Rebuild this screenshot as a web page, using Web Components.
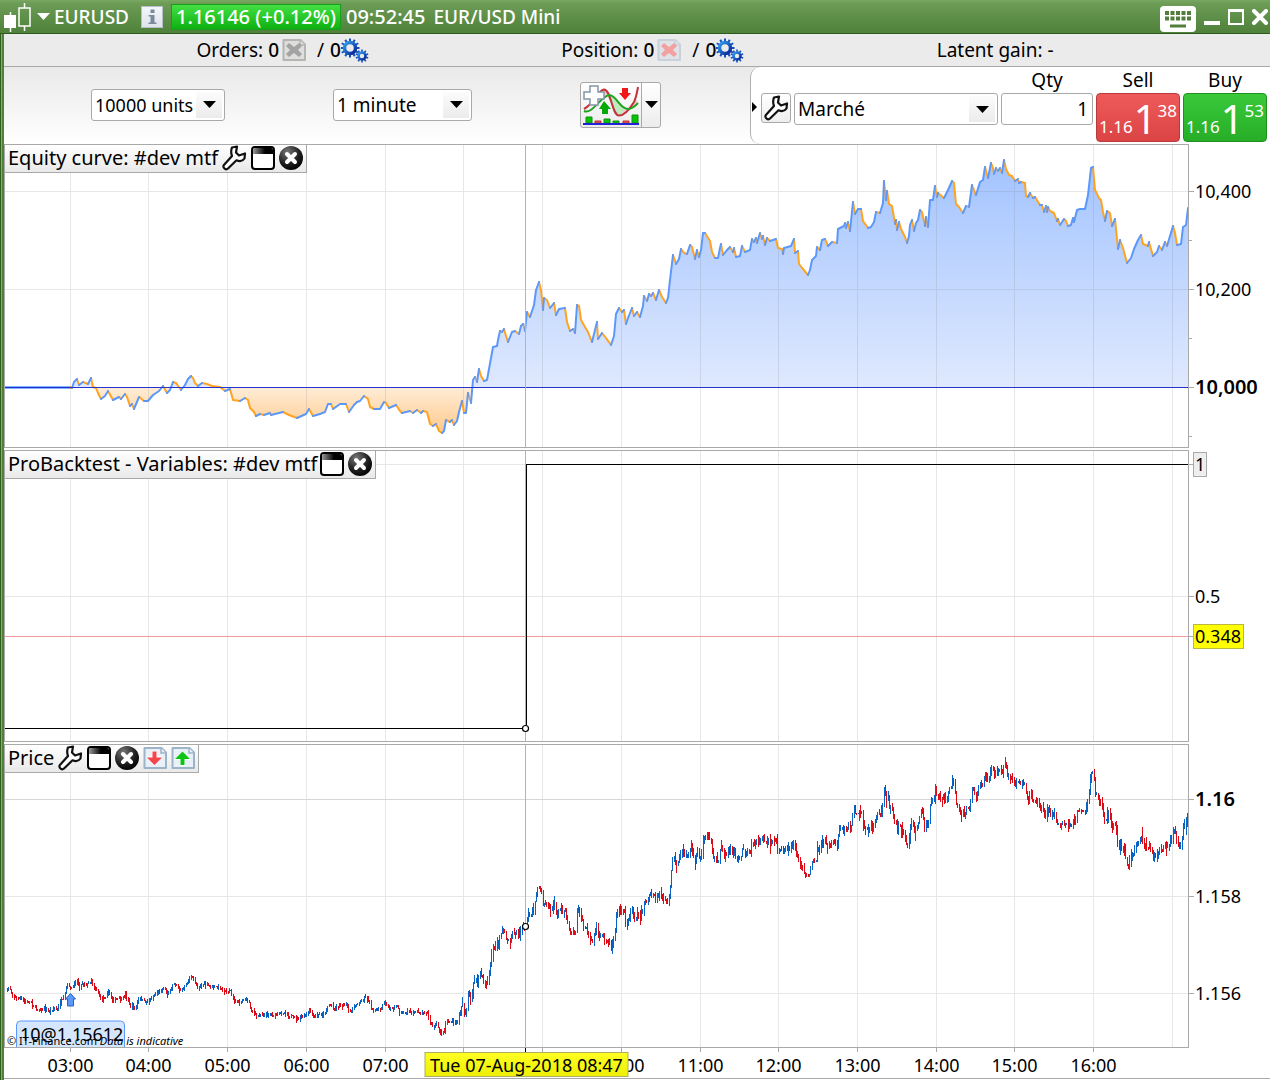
<!DOCTYPE html>
<html lang="en">
<head>
<meta charset="utf-8">
<meta name="viewport" content="width=device-width, initial-scale=1">
<title>EURUSD - EUR/USD Mini</title>
<style>
html,body{margin:0;background:#fff}
body{font:19px/24px "Noto Sans","Open Sans",sans-serif;color:#000}
</style>
</head>
<body>
<trading-window></trading-window>
<script>
const define=(name,html,setup)=>customElements.define(name,class extends HTMLElement{
  connectedCallback(){
    if(this.shadowRoot)return;
    const root=this.attachShadow({mode:'open'});
    root.innerHTML='<style>*{box-sizing:border-box}button{font:inherit;color:inherit;margin:0;padding:0;border:0;background:none;display:flex}svg{display:block}</style>'+html;
    if(setup)setup(root,this);
  }
});

/* ---------- icons ---------- */
const page=(edge,fill,inner)=>`<svg width="24" height="22" viewBox="0 0 24 22"><path d="M1.5 1h17L23 5.500V21H1.500z" fill="${fill}" stroke="${edge}" stroke-width="2" stroke-linejoin="round"/><path d="M18 1v5h5" fill="${fill}" stroke="${edge}" stroke-width="1.500"/>${inner}</svg>`;
const cross=c=>`<path d="M4 7l3-3 5 4 5-4 3 3-4 4 4 4-3 3-5-4-5 4-3-3 4-4z" fill="${c}"/>`;
const teeth=(cx,cy,r,n,w)=>{let s='';for(let i=0;i<n;i++)s+=`<rect x="${cx-w/2}" y="${cy-r}" width="${w}" height="4" transform="rotate(${i*360/n} ${cx} ${cy})"/>`;return s};
const icons={
  candles:'<svg width="28" height="30" viewBox="0 0 28 30"><path d="M6.500 10v20" stroke="#fff" stroke-width="1.500"/><rect x="0" y="13" width="12" height="13" fill="#fff"/><path d="M20.500 1v5M20.500 24v5" stroke="#fff" stroke-width="1.500"/><rect x="15" y="6" width="11" height="18" fill="none" stroke="#fff" stroke-width="1.500"/></svg>',
  down:'<svg width="13" height="7" viewBox="0 0 13 7"><path d="M0 0h13L6.500 7z" fill="currentColor"/></svg>',
  right:'<svg width="6" height="10" viewBox="0 0 6 10"><path d="M0 0v10l5-5z"/></svg>',
  info:'<svg width="22" height="22" viewBox="0 0 22 22"><defs><linearGradient id="g" y2="1" x2="0"><stop stop-color="#f4f7fa"/><stop offset="1" stop-color="#dde3ea"/></linearGradient></defs><rect x=".5" y=".5" width="21" height="21" fill="url(#g)" stroke="#b7bfc9"/><path d="M9.500 3.500h4v3.500h-4zM7.500 9h6v7.500h2V18h-8v-1.500h2v-6h-2z" fill="#7b8a9b"/></svg>',
  keyboard:'<svg width="36" height="26" viewBox="0 0 36 26"><rect width="36" height="26" rx="4" fill="#fff"/><path d="M5 7h26M5 12.500h26" stroke="#527e3b" stroke-width="4" stroke-dasharray="4 1.500"/><path d="M5 9.500h26" stroke="#fff" stroke-width="1"/><path d="M10 20h16" stroke="#527e3b" stroke-width="3"/></svg>',
  minimize:'<svg width="16" height="16" viewBox="0 0 16 16"><path d="M0 14h16" stroke="#fff" stroke-width="4"/></svg>',
  maximize:'<svg width="16" height="16" viewBox="0 0 16 16"><path d="M1 1h14v14H1z" fill="none" stroke="#fff" stroke-width="2"/><path d="M0 1.500h16" stroke="#fff" stroke-width="3"/></svg>',
  closewin:'<svg width="16" height="16" viewBox="0 0 16 16"><path d="M2 2l12 12M14 2L2 14" stroke="#fff" stroke-width="4" stroke-linecap="round"/></svg>',
  cancelgray:page('#b4b4b2','#dededc',cross('#a3a3a3')),
  cancelred:page('#c9d2da','#dfe3e8',cross('#f2a0a0')),
  gears:`<svg width="28" height="25" viewBox="0 0 28 25"><defs><linearGradient id="g" x2="1" y2="1"><stop stop-color="#2ea0ee"/><stop offset="1" stop-color="#0a1f96"/></linearGradient></defs><g fill="#1450b8">${teeth(9,10,9.5,12,2)}${teeth(21,18,6.5,10,1.6)}</g><circle cx="9" cy="10" r="5.500" fill="none" stroke="url(#g)" stroke-width="3.500"/><circle cx="21" cy="18" r="3.500" fill="none" stroke="url(#g)" stroke-width="2.500"/></svg>`,
  wrench:'<svg width="26" height="26" viewBox="0 0 26 26"><path d="M11 2.500l5-1-1 6 3 3 6-2-.5 5c-2 3-5 3-8 1.800L7 23.500c-2 2-5.500-.5-4.300-3.200L11 11c-1.500-4-1-6 0-8.500z" fill="#fff" stroke="#111" stroke-width="2.200" stroke-linejoin="round"/></svg>',
  window:'<svg width="24" height="24" viewBox="0 0 24 24"><defs><linearGradient id="g" x2="1" y2="0"><stop stop-color="#999"/><stop offset=".6" stop-color="#000"/></linearGradient></defs><rect x="1" y="1" width="22" height="22" rx="3" fill="#fff" stroke="#000" stroke-width="2"/><path d="M2 8V4q0-2 2-2h16q2 0 2 2v4z" fill="url(#g)"/></svg>',
  close:'<svg width="24" height="24" viewBox="0 0 24 24"><defs><radialGradient id="g" cx=".35" cy=".25" r=".8"><stop stop-color="#777"/><stop offset=".6" stop-color="#222"/><stop offset="1" stop-color="#000"/></radialGradient></defs><circle cx="12" cy="12" r="12" fill="url(#g)"/><path d="M8 8l8 8M16 8l-8 8" stroke="#fff" stroke-width="4" stroke-linecap="round"/></svg>',
  importdown:page('#9db4c8','#e9f0f7','<path d="M9 4h5v5h6l-8.500 9.500L3 9h6z" fill="#fff"/><path d="M9.500 4.500h4v6H19L11.500 18 4 10.500h5.500z" fill="#f5444c"/>'),
  exportup:page('#9db4c8','#e9f0f7','<path d="M9 19h5v-6h6L11.500 4 3 13h6z" fill="#fff"/><path d="M9.500 18h4v-6H19L11.500 4.500 4 12h5.500z" fill="#0bc413"/>'),
  indicators:'<svg width="56" height="40" viewBox="0 0 56 40"><path d="M1 25C10 20 15 5 21 5c7 0 9 26 16 26 7-2 9-14 17-16l1 5-8 4-11 1-10-14-9-1-10 10z" fill="#f8c9cb"/><path d="M24 11c7-3 11 6 17 13-2 9-7 9-10-1z" fill="#bfeabd"/><path d="M1 24C12 18 15 5 21 4.500c7 0 8 26 15 26S48 22 51 17c2-4 3-9 4-15" fill="none" stroke="#c3333b" stroke-width="2"/><path d="M1 26c8 4 16-14 25-16 8 0 10 14 19 14 5 0 8-4 10-6" fill="none" stroke="#1ea51e" stroke-width="2"/><path d="M7 1h8v6h6v7h-6v6H7v-6H1V7h6z" fill="#fff" stroke="#8496a6" stroke-width="1.500"/><path d="M39 3h6v5h3l-6 7-6-7h3z" fill="#f01818"/><path d="M19 29h6v-5h3l-7-8-5 8h3z" fill="#07a907"/><g fill="#05c505" stroke="#139013"><path d="M3 32h6v6H3zM21 34h6v4h-6zM30 36h6v2h-6zM49 30h6v8h-6z"/></g><g fill="#f45b5b" stroke="#b52c2c"><path d="M12 36h6v2h-6zM40 36h6v2h-6z"/></g><path d="M0 39h56" stroke="#2222d8" stroke-width="2"/></svg>'
};
customElements.define('ui-icon',class extends HTMLElement{
  connectedCallback(){
    if(!this.shadowRoot)this.attachShadow({mode:'open'}).innerHTML='<style>:host{display:inline-flex;flex:none}svg{display:block}</style>'+icons[this.getAttribute('name')];
  }
});

/* ---------- bars at the top ---------- */
define('title-bar',`<style>
:host{display:flex;align-items:center;height:34px;padding:0 2px 0 4px;color:#fff;background:linear-gradient(#79a862,#6c9c55 10%,#4f813b);border-bottom:1px solid #2f5a1e;white-space:nowrap}
h1{font:inherit;font-weight:500;margin:0 12px 0 4px}
.quote,time{font-size:20px;font-weight:500}
.quote{background:linear-gradient(#43e043,#0eb012);border:1px solid #1a9c1c;padding:0 4px;margin:0 5px 0 8px;height:26px}
.name{margin-left:8px;font-weight:500}
.win{display:flex;align-items:center;gap:8px;margin-left:auto}
.keys{margin-top:5px}
</style>
<ui-icon name="candles"></ui-icon><ui-icon name="down" style="margin-left:5px"></ui-icon><h1>EURUSD</h1>
<button aria-label="Information"><ui-icon name="info"></ui-icon></button>
<span class="quote">1.16146 (+0.12%)</span><time>09:52:45</time><span class="name">EUR/USD Mini</span>
<span class="win"><button class="keys" aria-label="Keyboard"><ui-icon name="keyboard"></ui-icon></button><button aria-label="Minimize"><ui-icon name="minimize"></ui-icon></button><button aria-label="Maximize"><ui-icon name="maximize"></ui-icon></button><button aria-label="Close"><ui-icon name="closewin"></ui-icon></button></span>`);

define('status-bar',`<style>
:host{display:flex;justify-content:space-evenly;align-items:center;height:33px;padding-right:24px;background:#ebebeb;border-bottom:1px solid #a9a9a9;white-space:nowrap}
div{display:flex;align-items:center}
.n{margin-left:5px}.b{font-weight:500}.s{margin:0 6px 0 11px}button{margin-left:3px}
</style>
<div>Orders: <span class="n b">0</span><button aria-label="Cancel orders"><ui-icon name="cancelgray"></ui-icon></button><span class="s">/</span><span class="b">0</span><ui-icon name="gears"></ui-icon></div>
<div>Position: <span class="n b">0</span><button aria-label="Close position"><ui-icon name="cancelred"></ui-icon></button><span class="s">/</span><span class="b">0</span><ui-icon name="gears"></ui-icon></div>
<div>Latent gain: <span class="n">-</span></div>`);

define('drop-down',`<style>
:host{display:inline-block;position:relative;height:32px}
select{appearance:none;font:inherit;color:#000;width:100%;height:100%;padding:0 26px 0 3px;border:1px solid #a9a9a9;border-radius:3px;background:#fff}
span{position:absolute;right:3px;top:3px;bottom:3px;width:26px;display:flex;align-items:center;justify-content:center;background:linear-gradient(#fcfcfc,#ebebeb);pointer-events:none}
:host(.units) select{font-size:18px}
</style><select><option></option></select><span><ui-icon name="down"></ui-icon></span>`,
(r,h)=>{r.querySelector('option').textContent=h.getAttribute('value');r.querySelector('select').setAttribute('aria-label',h.getAttribute('label'))});

define('price-button',`<style>
:host{display:block}
button{width:100%;height:49px;font-size:17px;color:#fff;border:1px solid var(--edge);border-radius:4px;background:linear-gradient(var(--top),var(--bottom));padding:0 2px;justify-content:space-between;line-height:24px}
.a{align-self:flex-end;padding-bottom:2px}.b{font-size:40px;line-height:50px}.c{padding-top:5px}
</style><button><span class="a">1.16</span><span class="b">1</span><span class="c"></span></button>`,
(r,h)=>{r.querySelector('.c').textContent=h.getAttribute('pips');r.querySelector('button').setAttribute('aria-label',h.getAttribute('label'))});

define('order-ticket',`<style>
:host{display:grid;grid-template-columns:7px 30px 204px 92px 84px 84px;grid-template-rows:24px 50px;column-gap:3px;padding:2px 3px 0 0;background:#fff;border-left:1px solid #b0b0b0;border-radius:10px 0 0 10px;align-items:start}
label,.h{text-align:center;line-height:22px}
.arrow{margin:9px 0 0 1px}
.tool{width:30px;height:30px;border:1px solid #a9a9a9;border-radius:3px;background:linear-gradient(#fff,#eee);align-items:center;justify-content:center}
drop-down{width:100%}
input{font:inherit;width:100%;height:32px;text-align:right;padding:0 4px;border:1px solid #a9a9a9;border-radius:3px;background:#fff}
.first{grid-column:4}
</style>
<label class="first" for="qty">Qty</label><span class="h">Sell</span><span class="h">Buy</span>
<button class="arrow" aria-label="Collapse"><ui-icon name="right"></ui-icon></button><button class="tool" aria-label="Order settings"><ui-icon name="wrench"></ui-icon></button>
<drop-down value="Marché" label="Order type"></drop-down><input id="qty" value="1">
<price-button label="Sell" pips="38" style="--top:#ee5a5a;--bottom:#dc4444;--edge:#b93a3a"></price-button><price-button label="Buy" pips="53" style="--top:#3ac93a;--bottom:#27ae27;--edge:#1f8f22"></price-button>`);

define('tool-bar',`<style>
:host{display:flex;height:77px;background:linear-gradient(#e9e9e9,#fff)}
.left{flex:1;display:flex;align-items:center;justify-content:space-between;padding:0 89px 2px 87px}
.units{width:134px}.period{width:139px}
.ind{display:flex;border:1px solid #a9a9a9;border-radius:3px;background:linear-gradient(#fff,#ececec);height:46px}
.ind button{align-items:center;justify-content:center;width:60px}
.ind .more{width:19px;border-left:1px solid #a9a9a9}
</style>
<div class="left"><drop-down class="units" value="10000 units" label="Units shown"></drop-down><drop-down class="period" value="1 minute" label="Period"></drop-down>
<div class="ind"><button aria-label="Add indicator"><ui-icon name="indicators"></ui-icon></button><button class="more" aria-label="More"><ui-icon name="down"></ui-icon></button></div></div>
<order-ticket></order-ticket>`);

/* ---------- charts ---------- */
define('chart-pane',`<style>
:host{display:grid;grid-template-columns:1fr 81px;min-width:0}
.plot{position:relative;border:1px solid #a9a9a9;min-width:0}
.tab{position:absolute;left:0;top:0;display:flex;align-items:center;gap:4px;height:28px;padding:0 3px 2px;background:linear-gradient(#fff,#e9e9e9);border:solid #a9a9a9;border-width:0 1px 1px 0;white-space:nowrap}
h2{font:inherit;font-size:20px;margin:0}
h2+button{margin-left:-1px}
</style><div class="plot"><slot></slot><div class="tab"><h2></h2></div></div><slot name="axis"></slot>`,
(r,h)=>{
  r.querySelector('h2').textContent=h.getAttribute('heading');
  const labels={wrench:'Settings',window:'Window',close:'Close',importdown:'Import',exportup:'Export'};
  for(const n of h.getAttribute('tools').split(' '))r.querySelector('.tab').insertAdjacentHTML('beforeend',`<button aria-label="${labels[n]}"><ui-icon name="${n}"></ui-icon></button>`);
});

const svgStyle='<style>:host{display:block;min-width:0}svg{width:100%;height:100%;overflow:visible;position:static}text{font:18px "Noto Sans","Open Sans",sans-serif}</style>';
define('value-axis',svgStyle+'<svg></svg>',(r,h)=>{
  let s='';
  for(const t of h.getAttribute('ticks').split(';')){
    const [y,text,kind]=t.split('|');
    s+=`<path d="M0 ${+y+.5}h${text?5:3}" stroke="#a9a9a9"/>`;
    if(!text)continue;
    if(kind==='box')s+=`<rect x="4.500" y="${y-11.5}" width="13" height="24" fill="#eee" stroke="#a9a9a9"/>`;
    if(kind==='mark')s+=`<rect x="4.500" y="${y-11.5}" width="50" height="24" fill="#ff0" stroke="#b9b940"/>`;
    s+=`<text x="6" y="${+y+7}"${kind==='bold'?' style="font-weight:600;font-size:20px"':''}>${text}</text>`;
  }
  r.querySelector('svg').innerHTML=s;
});

const hours=[70,148,227,306,385,463,542,621,700,778,857,936,1014,1093,1172];
const frame=(top,height,lines,under,over='',dots='')=>{
  let g='';
  for(const x of hours)g+=`M${x+.5} ${top}v${height}`;
  for(const y of lines)g+=`M5 ${y+.5}h1183`;
  return `<svg><svg width="100%" height="100%" viewBox="5 ${top} 1183 ${height}" preserveAspectRatio="none" style="overflow:hidden">${under}<path d="${g}" stroke="#808080" stroke-opacity=".19" shape-rendering="crispEdges"/>${over}<path d="M525.500 ${top}v${height}" stroke="#f29a9a" shape-rendering="crispEdges"/></svg>${dots}</svg>`;
};
const dot=y=>`<circle cx="${(520.5/1183*100).toFixed(2)}%" cy="${y}" r="3" fill="#fff" stroke="#000" stroke-width="1.200"/>`;

/* pairs of x and y, one per turn of the equity curve */
const equity=`70 387 72 388 74 382 77 379 79 385 83 382 88 384 91 378 93 387 96 388 98 393 101 399 105 396 108 391 113 400 119 397 121 399 125 394 127 397 130 406 132 404 134 409 139 397 144 401 148 401 153 395 159 391 163 386 167 393 170 390 173 382 176 383 181 390 185 385 188 379 191 376 193 378 195 383 198 386 202 383 207 384 212 386 220 387 225 391 230 389 233 400 240 401 245 398 248 400 250 408 254 412 256 416 260 414 264 415 270 413 271 415 283 412 289 415 297 418 306 414 309 409 313 416 320 414 325 412 328 404 331 404 333 409 340 404 346 404 349 412 354 405 357 402 360 401 364 396 368 399 370 407 374 409 380 409 384 402 386 403 389 408 396 405 400 411 402 413 410 411 413 413 417 410 421 413 423 411 427 412 430 424 433 426 436 424 439 431 442 433 444 431 446 420 450 422 452 420 454 425 457 421 459 412 462 401 464 413 466 413 468 393 471 403 473 380 475 377 477 382 479 369 481 376 484 381 487 380 489 369 491 358 493 347 497 346 498 340 500 331 502 332 504 329 506 336 508 342 512 332 515 331 519 334 521 326 523 324 525 331 527 312 530 317 534 305 536 290 539 282 541 290 543 310 544 298 547 300 550 308 554 303 556 315 559 309 565 308 567 322 570 331 573 329 575 333 577 305 579 306 581 320 585 327 588 332 592 342 597 322 598 339 602 333 606 338 611 345 614 336 616 314 619 308 622 312 624 310 626 324 628 318 632 308 634 316 637 312 640 317 643 306 644 296 647 301 649 294 651 296 653 293 656 300 659 290 662 297 666 303 668 298 670 280 673 255 676 264 679 259 681 249 684 253 687 254 690 245 692 247 695 259 697 250 699 257 701 250 703 233 705 233 710 241 712 252 715 258 718 258 720 248 721 244 723 255 727 250 730 247 733 252 734 248 736 257 740 256 742 246 745 252 750 250 752 239 754 242 756 238 757 243 760 233 762 239 763 236 765 245 767 238 770 241 776 239 778 248 782 249 783 254 784 248 791 246 794 239 795 253 798 251 799 264 803 269 808 275 810 270 812 260 816 256 817 247 820 250 822 240 825 239 828 246 832 242 837 243 838 229 844 226 845 223 846 228 848 222 850 231 853 202 855 214 858 209 861 209 863 221 868 228 871 227 874 222 876 212 880 213 883 203 884 181 886 200 887 191 889 204 892 206 895 224 896 220 897 230 899 222 901 229 905 237 907 243 909 236 910 225 912 220 914 231 916 223 918 220 920 210 922 212 925 226 926 217 928 227 930 200 933 200 935 186 937 197 938 193 944 198 948 190 952 181 954 183 956 204 959 207 963 213 966 206 969 207 972 185 976 195 980 182 983 180 985 167 988 178 991 163 993 168 994 174 996 168 998 171 1000 168 1002 173 1004 160 1006 169 1009 175 1012 176 1015 181 1018 179 1019 183 1021 182 1025 183 1026 196 1028 197 1030 193 1033 198 1035 197 1040 205 1042 205 1044 212 1046 206 1047 212 1048 207 1050 211 1054 213 1057 221 1058 219 1060 225 1064 219 1066 221 1068 226 1071 225 1073 218 1074 222 1077 210 1080 209 1085 209 1088 195 1091 168 1093 167 1095 190 1099 198 1101 200 1103 212 1105 221 1107 211 1110 213 1112 226 1115 219 1118 249 1120 240 1123 248 1127 263 1131 258 1134 249 1138 240 1141 235 1143 244 1148 246 1149 242 1153 256 1157 252 1159 246 1162 250 1165 242 1167 246 1170 236 1173 226 1175 233 1177 245 1181 244 1183 227 1186 225 1188 208`.split(' ').map(Number).reduce((a,v,i)=>{i%2?a[a.length-1].push(v):a.push([v]);return a},[]);

define('equity-chart',svgStyle+'<div id="c" style="height:100%"></div>',r=>{
  let up='',down='';
  for(let i=1;i<equity.length;i++){
    const [a,b]=equity[i-1],[c,d]=equity[i],seg=`M${a} ${b}L${c} ${d}`;
    if(d<=b)up+=seg;else down+=seg;
  }
  const area='M70 387L'+equity.map(p=>p.join(' ')).join('L')+'L1188 387z';
  const under=`<defs><linearGradient id="b" gradientUnits="userSpaceOnUse" x1="0" x2="0" y1="160" y2="387"><stop stop-color="#a2c3ff"/><stop offset="1" stop-color="#dfe9fe"/></linearGradient><linearGradient id="o" gradientUnits="userSpaceOnUse" x1="0" x2="0" y1="387" y2="433"><stop stop-color="#ffedd8"/><stop offset="1" stop-color="#ffc988"/></linearGradient><clipPath id="t"><path d="M5 145h1183v242H5z"/></clipPath><clipPath id="u"><path d="M5 387h1183v60H5z"/></clipPath></defs><path d="${area}" fill="url(#b)" clip-path="url(#t)"/><path d="${area}" fill="url(#o)" clip-path="url(#u)"/>`;
  const over=`<path d="M5 387.500h66" stroke="#7fb0ff" stroke-width="3"/><g fill="none" stroke-width="2" stroke-linecap="round"><path d="${down}" stroke="#ffa320"/><path d="${up}" stroke="#5c98fb"/></g><path d="M5 387.500h1183" stroke="#2733cf" shape-rendering="crispEdges"/>`;
  r.querySelector('#c').innerHTML=frame(145,302,[191,289],under,over);
});

define('variable-chart',svgStyle+'<div id="c" style="height:100%"></div>',r=>{
  r.querySelector('#c').innerHTML=frame(451,290,[464,596],'','<path d="M5 636.500h1183" stroke="#f29a9a" shape-rendering="crispEdges"/>')
    .replace('</svg></svg>','<path d="M5 728.500h521.500V464.500H1188" fill="none" stroke="#000" shape-rendering="crispEdges"/></svg>'+dot(277.5)+'</svg>');
});

define('price-chart',svgStyle+'<div id="c" style="height:100%"></div>',r=>{
  const early=[[7,990],[9,987],[12,994],[16,998],[20,997],[24,1002],[30,1001],[36,1009],[44,1009],[50,1012],[54,1007],[57,1010],[60,1000],[63,1000],[66,988],[68,983],[70,988],[73,986]];
  const pts=early.concat(equity.filter(p=>p[0]>73).map(([x,y])=>[x,765+(y-163)*.993]));
  let seed=7,k=0;
  const rnd=()=>(seed=(seed*16807)%2147483647)/2147483647;
  const at=x=>{while(k<pts.length-2&&pts[k+1][0]<x)k++;const [a,b]=pts[k],[c,d]=pts[k+1];return b+(d-b)*Math.min(1,(x-a)/(c-a))};
  let prev=990,up='',down='';
  for(let x=7;x<1188;x+=1.3125){
    const amp=x<460?4:9,y=at(x)+(rnd()-.5)*amp*.6,px=Math.round(x)+.5;
    const hi=Math.round(Math.min(prev,y)-rnd()*rnd()*amp),lo=Math.round(Math.max(prev,y)+rnd()*rnd()*amp)+1;
    const seg=`M${px} ${hi}V${lo}`;
    if(y<=prev)up+=seg;else down+=seg;
    prev=y;
  }
  const over=`<path d="M5 799.500h1183" stroke="#d6d6d6" shape-rendering="crispEdges"/><g shape-rendering="crispEdges"><path d="${up}" stroke="#0763c4"/><path d="${down}" stroke="#dc0a14"/></g>`;
  const extras=`<svg x="5.540%" overflow="visible"><path d="M-5 254l5-5.500 5 5.500H3v7h-6v-7z" fill="#5c98fb" stroke="#2c5fc0"/></svg>
  <g><path d="M11.500 302v-22q0-4 4-4h100q4 0 4 4v22z" fill="#d5e7fe"/><path d="M11.500 302v-22q0-4 4-4h100q4 0 4 4v22" fill="none" stroke="#5c98fb"/><text x="15" y="296">10@1.15612</text></g>
  <text x="2" y="300" style="font-size:11px">© IT-Finance.com <tspan font-style="italic">Data is indicative</tspan></text>`;
  r.querySelector('#c').innerHTML=frame(745,302,[896,993],'',over,extras+dot(181.5));
});

define('time-axis',`${svgStyle}<style>:host{height:31px;border-bottom:1px solid #a9a9a9}div{height:100%;margin-right:81px}text{text-anchor:middle}</style><div><svg></svg></div>`,r=>{
  const pct=x=>((x-3.5)/1185*100).toFixed(3)+'%';
  const label=['03','04','05','06','07','','','10','11','12','13','14','15','16'];
  let s='';
  hours.slice(0,14).forEach((x,i)=>{
    s+=`<line x1="${pct(x)}" x2="${pct(x)}" y1="0" y2="4" stroke="#a9a9a9"/>`;
    if(label[i])s+=`<text x="${pct(x)}" y="24">${label[i]}:00</text>`;
  });
  s+=`<line x1="${pct(525)}" x2="${pct(525)}" y1="0" y2="4" stroke="#000"/><svg x="${pct(526)}" overflow="visible"><defs><linearGradient id="y" x2="0" y2="1"><stop stop-color="#ff2"/><stop offset="1" stop-color="#eeee08"/></linearGradient></defs><rect x="-101.500" y="4.500" width="203" height="24" fill="url(#y)" stroke="#aeae60"/><text x="0" y="24">Tue 07-Aug-2018 08:47</text></svg>`;
  r.querySelector('svg').innerHTML=s;
});

define('trading-window',`<style>
:host{display:block;background:#fff}
.body{padding-left:4px;background:linear-gradient(90deg,#33601f 1px,#85ad70 1px 2px,#518139 2px 4px,#fff 4px)}
.charts{display:grid;grid-template-rows:304px 292px 304px 31px;row-gap:2px}
time-axis{margin-top:-2px}
</style>
<title-bar></title-bar>
<div class="body"><status-bar></status-bar><tool-bar></tool-bar>
<div class="charts">
<chart-pane heading="Equity curve: #dev mtf" tools="wrench window close"><equity-chart style="height:100%"></equity-chart><value-axis slot="axis" ticks="47|10,400;96|;145|10,200;194|;243|10,000|bold;292|"></value-axis></chart-pane>
<chart-pane heading="ProBacktest - Variables: #dev mtf" tools="window close"><variable-chart style="height:100%"></variable-chart><value-axis slot="axis" ticks="14|1|box;146|0.5;186|0.348|mark"></value-axis></chart-pane>
<chart-pane heading="Price" tools="wrench window close importdown exportup"><price-chart style="height:100%"></price-chart><value-axis slot="axis" ticks="55|1.16|bold;152|1.158;249|1.156"></value-axis></chart-pane>
<time-axis></time-axis>
</div></div>`);
</script>
</body>
</html>
